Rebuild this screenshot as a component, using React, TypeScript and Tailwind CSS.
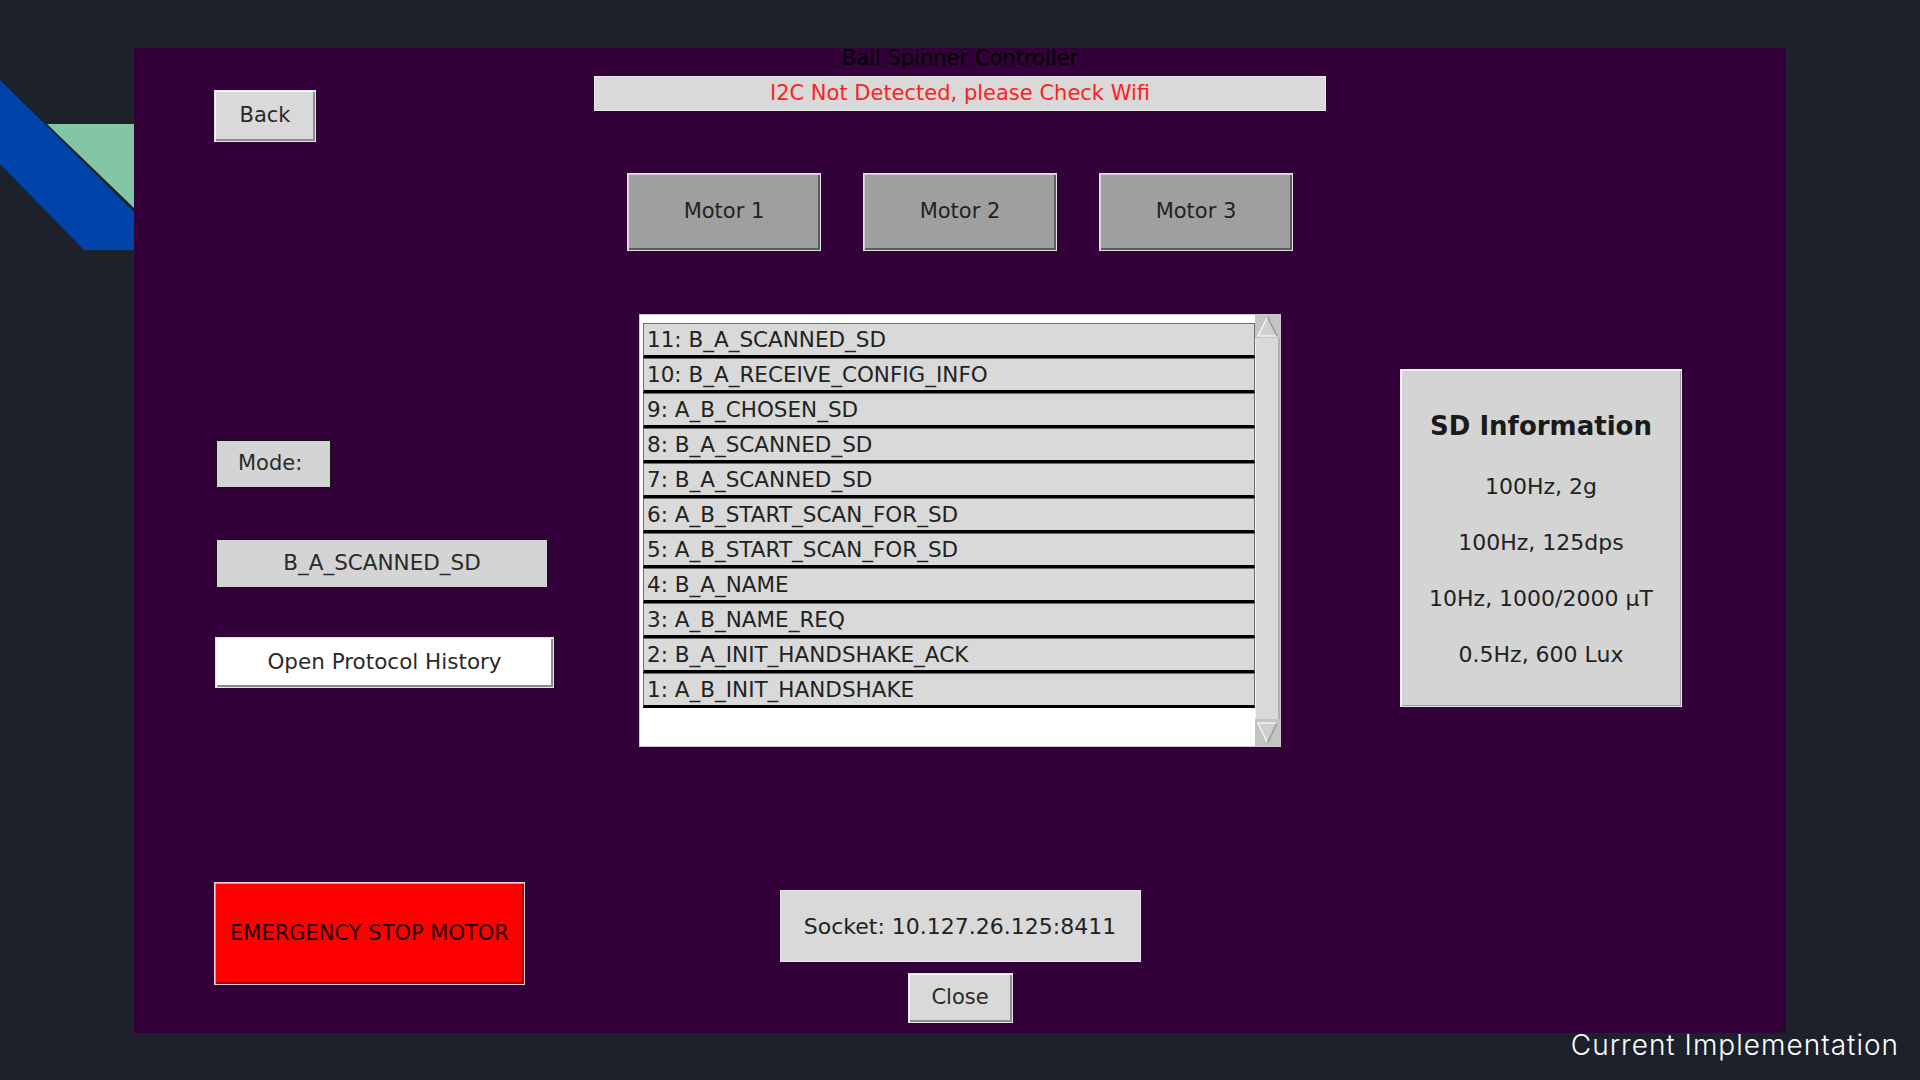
import React from 'react';

const history = [
    '11: B_A_SCANNED_SD',
    '10: B_A_RECEIVE_CONFIG_INFO',
    '9: A_B_CHOSEN_SD',
    '8: B_A_SCANNED_SD',
    '7: B_A_SCANNED_SD',
    '6: A_B_START_SCAN_FOR_SD',
    '5: A_B_START_SCAN_FOR_SD',
    '4: B_A_NAME',
    '3: A_B_NAME_REQ',
    '2: B_A_INIT_HANDSHAKE_ACK',
    '1: A_B_INIT_HANDSHAKE',
];

const sdInfo = ['100Hz, 2g', '100Hz, 125dps', '10Hz, 1000/2000 µT', '0.5Hz, 600 Lux'];

// tk style raised button
const raised =
    'flex items-center justify-center border border-[#e4e4e4] shadow-[inset_1px_1px_0_#ffffff,inset_-2px_-2px_0_#8c8c8c] text-[#2a2a2a]';

function Decoration() {
    return (
        <svg width="134" height="260" viewBox="0 0 134 260" className="shrink-0">
            <polygon points="47,124 134,124 134,208" fill="#82c6a5" />
            <polygon points="0,80 134,212 134,250 84,250 0,164" fill="#0044aa" />
        </svg>
    );
}

function ScrollArrow({ down }: { down?: boolean }) {
    return (
        <svg width="25" height={down ? 27 : 23} viewBox={down ? '0 0 25 27' : '0 0 25 23'} className="block">
            <rect width="25" height={down ? 27 : 23} fill="#c4c4c4" />
            {down ? (
                <>
                    <polygon points="3,4 22,4 12.5,24" fill="#cfcfcf" />
                    <polyline points="22,4 3,4 12.5,24" fill="none" stroke="#f4f4f4" strokeWidth="1.5" />
                    <line x1="22" y1="4" x2="12.5" y2="24" stroke="#9a9a9a" strokeWidth="1.5" />
                </>
            ) : (
                <>
                    <polygon points="12.5,2 22,21 3,21" fill="#cfcfcf" />
                    <polyline points="12.5,2 3,21 22,21" fill="none" stroke="#f4f4f4" strokeWidth="1.5" />
                    <line x1="12.5" y1="2" x2="22" y2="21" stroke="#9a9a9a" strokeWidth="1.5" />
                </>
            )}
        </svg>
    );
}

function HistoryList() {
    return (
        <div className="mt-[63px] mx-auto w-[642px] h-[433px] flex border border-[#cfc6d0] bg-white">
            <div className="flex-1 pl-[3px] pt-[8px]">
                {history.map((item, i) => (
                    <div
                        key={i}
                        className="h-[35px] flex items-center pl-[3px] bg-[#d9d9d9] border border-[#6a6a6a] border-b-[3px] border-b-black text-[21.5px] leading-none text-[#222] whitespace-nowrap"
                    >
                        {item}
                    </div>
                ))}
            </div>
            <div className="w-[25px] flex flex-col bg-[#c4c4c4]">
                <ScrollArrow />
                <div className="flex-1 bg-[#d9d9d9] border-l border-l-[#f2f2f2] border-r-2 border-r-[#b0b0b0]" />
                <ScrollArrow down />
            </div>
        </div>
    );
}

export default function App() {
    return (
        <div className="w-[1920px] h-[1080px] bg-[#1c212b] overflow-hidden flex flex-col">
            <div className="flex">
                <Decoration />
                <div className="mt-[48px] w-[1652px] h-[985px] bg-[#33003a] rounded-br-[5px] flex font-['DejaVu_Sans',sans-serif]">
                    {/* left column */}
                    <div className="ml-[80px] w-[342px] flex flex-col">
                        <button className={`${raised} mt-[42px] w-[102px] h-[52px] bg-[#d9d9d9] text-[21px]`}>Back</button>
                        <div className="mt-[298px] ml-[2px] w-[115px] h-[48px] flex items-center pl-[21px] bg-[#d4d4d4] border border-[#141414] text-[21px] text-[#2a2a2a]">
                            Mode:
                        </div>
                        <div className="mt-[51px] ml-[2px] w-[332px] h-[49px] flex items-center justify-center bg-[#d4d4d4] border border-[#141414] text-[21.5px] text-[#2a2a2a]">
                            B_A_SCANNED_SD
                        </div>
                        <button className={`${raised} mt-[49px] ml-[1px] w-[339px] h-[51px] bg-white text-[21.5px]`}>
                            Open Protocol History
                        </button>
                        <button className="mt-[194px] w-[311px] h-[103px] flex items-center justify-center bg-[#ff0000] border border-[#f0d0d4] shadow-[inset_1px_1px_0_#ff8080,inset_-2px_-2px_0_#b00000] text-[21px] text-[#1a0000]">
                            EMERGENCY STOP MOTOR
                        </button>
                    </div>

                    {/* center column */}
                    <div className="ml-[38px] w-[732px] flex flex-col">
                        <div className="h-[21px] text-center text-[21px] leading-none text-black">Ball Spinner Controller</div>
                        <div className="mt-[7px] h-[35px] flex items-center justify-center bg-[#d9d9d9] border border-[#e8e8e8] text-[21px] text-[#ff2020]">
                            I2C Not Detected, please Check Wifi
                        </div>
                        <div className="mt-[62px] flex justify-center gap-[42px]">
                            {['Motor 1', 'Motor 2', 'Motor 3'].map((m) => (
                                <button
                                    key={m}
                                    className="w-[194px] h-[78px] flex items-center justify-center bg-[#9f9f9f] border border-[#e2e2e2] shadow-[inset_1px_1px_0_#d0d0d0,inset_-2px_-2px_0_#5c5c5c] text-[21px] text-[#222]"
                                >
                                    {m}
                                </button>
                            ))}
                        </div>
                        <HistoryList />
                        <div className="mt-[143px] mx-auto w-[361px] h-[72px] flex items-center justify-center bg-[#d9d9d9] border border-[#e6e6e6] text-[22px] text-[#222]">
                            Socket: 10.127.26.125:8411
                        </div>
                        <button className={`${raised} mt-[11px] mx-auto w-[105px] h-[50px] bg-[#d9d9d9] text-[21px]`}>Close</button>
                    </div>

                    {/* right column */}
                    <div className="ml-[74px] w-[282px]">
                        <div className="mt-[321px] h-[338px] flex flex-col items-center pt-[25px] bg-[#d4d4d4] border border-[#ececec] shadow-[inset_1px_1px_0_#ffffff,inset_-1px_-1px_0_#9a9a9a] text-[#222]">
                            <div className="h-[63px] flex items-center text-[26px] font-bold text-[#1a1a1a]">SD Information</div>
                            {sdInfo.map((line) => (
                                <div key={line} className="h-[56px] flex items-center text-[22px]">
                                    {line}
                                </div>
                            ))}
                        </div>
                    </div>
                </div>
            </div>
            <div className="mt-[-2px] pr-[21px] text-right text-[28px] tracking-[1px] leading-none font-light text-white font-['Inter',sans-serif]">
                Current Implementation
            </div>
        </div>
    );
}
